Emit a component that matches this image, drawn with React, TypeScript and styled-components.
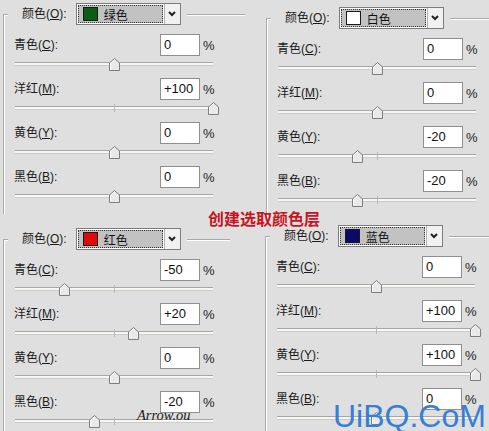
import React from "react";
import styled, { createGlobalStyle } from "styled-components";

const GlobalStyle = createGlobalStyle`
  html, body {
    margin: 0;
    padding: 0;
    background: #dfdfdf;
  }
  body {
    font-family: "Liberation Sans", "Noto Sans CJK SC", sans-serif;
    color: #111;
  }
`;

const Page = styled.div`
  position: relative;
  width: 489px;
  height: 431px;
  overflow: hidden;
  display: grid;
  grid-template-columns: 245px 244px;
  grid-template-rows: 215px 216px;
  background: #dfdfdf;
`;

const Cell = styled.div<{ $top: number; $left: number; $right: number }>`
  padding: ${(p) => p.$top}px ${(p) => p.$right}px 0 ${(p) => p.$left}px;
  min-width: 0;
`;

const Group = styled.fieldset`
  margin: 0;
  padding: 9px 0 4px 4px;
  border: none;
  border-top: 1px solid #a9a9a9;
  border-left: 1px solid #a9a9a9;
  box-shadow: inset 1px 1px 0 #ffffff;
  min-width: 0;
`;

const Legend = styled.legend`
  padding: 0 6px 0 14px;
  background: #dfdfdf;
`;

const LegendInner = styled.div`
  display: flex;
  align-items: center;
  gap: 9px;
`;

const Label = styled.span`
  font-size: 12px;
  line-height: 22px;
  white-space: nowrap;
  color: #1a1a1a;
`;

const Select = styled.div`
  display: flex;
  height: 20px;
  border: 1px solid #7c7c7c;
  background: #fff;
`;

const SelectValue = styled.div`
  width: 80px;
  margin: 1px;
  padding-left: 5px;
  display: flex;
  align-items: center;
  gap: 6px;
  background: #c2c2c2;
  outline: 1px dotted #333;
  outline-offset: -1px;
  font-size: 12px;
  color: #111;
`;

const Swatch = styled.span<{ $color: string }>`
  width: 13px;
  height: 12px;
  border: 1px solid #1a1a1a;
  background: ${(p) => p.$color};
`;

const ArrowButton = styled.div`
  width: 15px;
  border-left: 1px solid #b4b4b4;
  background: #f1f1f1;
  display: flex;
  align-items: center;
  justify-content: center;
`;

const Rows = styled.div`
  width: 200px;
  margin-left: 6px;
`;

const Row = styled.div`
  display: flex;
  align-items: center;
  height: 22px;
`;

const RowLabel = styled(Label)`
  flex: 1;
`;

const ValueBox = styled.div`
  box-sizing: border-box;
  width: 40px;
  height: 22px;
  padding: 0 3px;
  border: 1px solid #8f8f8f;
  background: #fff;
  font-size: 13px;
  line-height: 20px;
  color: #111;
`;

const Percent = styled.span`
  width: 11px;
  margin-left: 3px;
  font-size: 13px;
  color: #222;
`;

const Slider = styled.div`
  position: relative;
  width: 198px;
  height: 22px;
  margin-left: 1px;
`;

const Rail = styled.div`
  position: absolute;
  left: 0;
  right: 0;
  top: 6px;
  height: 2px;
  border-top: 1px solid #a6a6a6;
  border-bottom: 1px solid #cbcbcb;
  background: #f8f8f2;
`;

const Tick = styled.div`
  position: absolute;
  left: 99px;
  top: 4px;
  width: 1px;
  height: 8px;
  background: #b8b8b8;
`;

const Thumb = styled.svg`
  position: absolute;
  top: 2px;
  width: 11px;
  height: 13px;
`;

const Title = styled.div`
  position: absolute;
  left: 208px;
  top: 210px;
  font-family: "Noto Sans CJK SC", sans-serif;
  font-weight: 700;
  font-size: 16px;
  line-height: 16px;
  color: #c8141e;
  white-space: nowrap;
`;

const Signature = styled.div`
  position: absolute;
  left: 137px;
  top: 408px;
  font-family: "Liberation Serif", serif;
  font-style: italic;
  font-size: 14.5px;
  line-height: 14px;
  color: #1a1a1a;
`;

const Watermark = styled.div`
  position: absolute;
  left: 333px;
  top: 400px;
  font-family: "Liberation Sans", sans-serif;
  font-size: 32px;
  line-height: 32px;
  color: #3580d4;
  white-space: nowrap;
`;

interface Channel {
  name: string;
  key: string;
  value: number;
}

interface PanelData {
  colorName: string;
  swatch: string;
  top: number;
  left: number;
  right: number;
  values: number[];
}

const channelNames = [
  { name: "青色", key: "C" },
  { name: "洋红", key: "M" },
  { name: "黄色", key: "Y" },
  { name: "黑色", key: "B" },
];

const panels: PanelData[] = [
  { colorName: "绿色", swatch: "#0a5e12", top: 3, left: 3, right: 0, values: [0, 100, 0, 0] },
  { colorName: "白色", swatch: "#ffffff", top: 7, left: 21, right: 0, values: [0, 0, -20, -20] },
  { colorName: "红色", swatch: "#e00a0a", top: 13, left: 3, right: 15, values: [-50, 20, 0, -20] },
  { colorName: "蓝色", swatch: "#0a0a6a", top: 10, left: 20, right: 0, values: [0, 100, 100, 0] },
];

const formatValue = (v: number): string => (v > 0 ? `+${v}` : `${v}`);

const ChannelRow = ({ channel }: { channel: Channel }) => {
  const pos = ((channel.value + 100) / 200) * 198;
  return (
    <>
      <Row>
        <RowLabel>
          {channel.name}(<u>{channel.key}</u>):
        </RowLabel>
        <ValueBox>{formatValue(channel.value)}</ValueBox>
        <Percent>%</Percent>
      </Row>
      <Slider>
        <Rail />
        <Tick />
        <Thumb viewBox="0 0 11 13" style={{ left: pos - 5.5 }}>
          <polygon
            points="0.5,5 5.5,0.5 10.5,5 10.5,12.5 0.5,12.5"
            fill="#e9e9e9"
            stroke="#7d7d7d"
          />
          <polyline points="1.5,11.5 1.5,5.4 5.5,1.8" fill="none" stroke="#ffffff" />
        </Thumb>
      </Slider>
    </>
  );
};

const Panel = ({ data }: { data: PanelData }) => (
  <Cell $top={data.top} $left={data.left} $right={data.right}>
    <Group>
      <Legend>
        <LegendInner>
          <Label>
            颜色(<u>O</u>):
          </Label>
          <Select>
            <SelectValue>
              <Swatch $color={data.swatch} />
              {data.colorName}
            </SelectValue>
            <ArrowButton>
              <svg width="8" height="6" viewBox="0 0 8 6">
                <polyline points="1,1 4,4 7,1" fill="none" stroke="#222" strokeWidth="2" />
              </svg>
            </ArrowButton>
          </Select>
        </LegendInner>
      </Legend>
      <Rows>
        {channelNames.map((c, i) => (
          <ChannelRow key={c.key} channel={{ ...c, value: data.values[i] }} />
        ))}
      </Rows>
    </Group>
  </Cell>
);

export default function App() {
  return (
    <>
      <GlobalStyle />
      <Page>
        {panels.map((p) => (
          <Panel key={p.colorName} data={p} />
        ))}
        <Title>创建选取颜色层</Title>
        <Signature>Arrow.ou</Signature>
        <Watermark>UiBQ.CoM</Watermark>
      </Page>
    </>
  );
}
